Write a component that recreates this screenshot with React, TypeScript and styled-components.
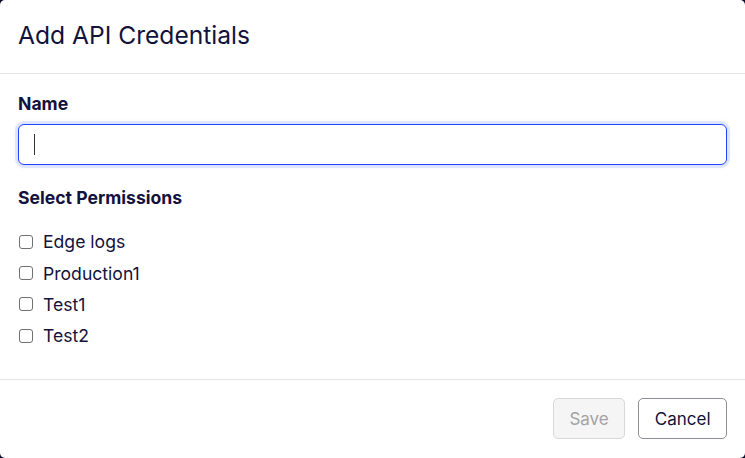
import React, { useState } from "react";
import styled, { createGlobalStyle } from "styled-components";

const GlobalStyle = createGlobalStyle`
  html, body {
    margin: 0;
    padding: 0;
    background: #0b0b2e;
  }
  * {
    box-sizing: border-box;
  }
`;

const Modal = styled.div`
  width: 745px;
  height: 458px;
  background: #fff;
  border-radius: 5px;
  display: flex;
  flex-direction: column;
  font-family: Inter, "Noto Sans", sans-serif;
  color: #12123d;
  overflow: hidden;
`;

const Header = styled.div`
  height: 74px;
  display: flex;
  align-items: center;
  padding: 0 18px 3px;
  border-bottom: 1px solid #e6e6e9;
`;

const Title = styled.h2`
  margin: 0;
  font-size: 24.6px;
  font-weight: 400;
`;

const Body = styled.div`
  padding: 20px 18px 0;
  display: flex;
  flex-direction: column;
`;

const Label = styled.label<{ $gap?: number }>`
  display: block;
  font-size: 17.6px;
  line-height: 20px;
  font-weight: 650;
  margin-bottom: ${(p) => p.$gap ?? 10}px;
`;

const Input = styled.input`
  width: 100%;
  height: 41px;
  border: 1px solid #1f47ff;
  border-radius: 6px;
  padding: 0 15px;
  font-family: inherit;
  font-size: 17px;
  color: #12123d;
  outline: none;
  box-shadow: 0 0 0 3px rgba(31, 71, 255, 0.1), 0 0 6px rgba(31, 71, 255, 0.15);
  margin-bottom: 23px;
`;

const Caret = styled.span`
  position: absolute;
  left: 16px;
  top: 10px;
  width: 1px;
  height: 21px;
  background: #333;
`;

const InputWrap = styled.div`
  position: relative;
`;

const List = styled.div`
  display: flex;
  flex-direction: column;
`;

const Row = styled.label`
  height: 31.4px;
  display: flex;
  align-items: center;
  gap: 10px;
  font-size: 17.6px;
  cursor: pointer;
`;

const Box = styled.input`
  appearance: none;
  width: 14px;
  height: 14px;
  margin: 0 0 0 1px;
  border: 1px solid #707070;
  border-radius: 3px;
  background: #fff;
  &:checked {
    background: #1f47ff;
    border-color: #1f47ff;
  }
`;

const Footer = styled.div`
  margin-top: auto;
  height: 79px;
  border-top: 1px solid #e6e6e9;
  display: flex;
  justify-content: flex-end;
  align-items: center;
  gap: 13px;
  padding: 0 18px 1px;
`;

const Button = styled.button<{ $disabled?: boolean }>`
  height: 41px;
  padding: 0 15.5px;
  border-radius: 5px;
  font-family: inherit;
  font-size: 17px;
  border: 1px solid ${(p) => (p.$disabled ? "#d8d8d8" : "#8e8e94")};
  background: ${(p) => (p.$disabled ? "#f5f5f5" : "#fff")};
  color: ${(p) => (p.$disabled ? "#a3a3a3" : "#12123d")};
  cursor: ${(p) => (p.$disabled ? "default" : "pointer")};
`;

const permissions = ["Edge logs", "Production1", "Test1", "Test2"];

export default function App() {
  const [name, setName] = useState("");
  const [checked, setChecked] = useState<string[]>([]);

  const toggle = (p: string) =>
    setChecked((prev) => (prev.includes(p) ? prev.filter((x) => x !== p) : [...prev, p]));

  return (
    <>
      <GlobalStyle />
      <Modal>
        <Header>
          <Title>Add API Credentials</Title>
        </Header>
        <Body>
          <Label>Name</Label>
          <InputWrap>
            <Input value={name} onChange={(e) => setName(e.target.value)} />
            {name === "" && <Caret />}
          </InputWrap>
          <Label $gap={18}>Select Permissions</Label>
          <List>
            {permissions.map((p) => (
              <Row key={p}>
                <Box type="checkbox" checked={checked.includes(p)} onChange={() => toggle(p)} />
                {p}
              </Row>
            ))}
          </List>
        </Body>
        <Footer>
          <Button $disabled disabled>
            Save
          </Button>
          <Button>Cancel</Button>
        </Footer>
      </Modal>
    </>
  );
}
